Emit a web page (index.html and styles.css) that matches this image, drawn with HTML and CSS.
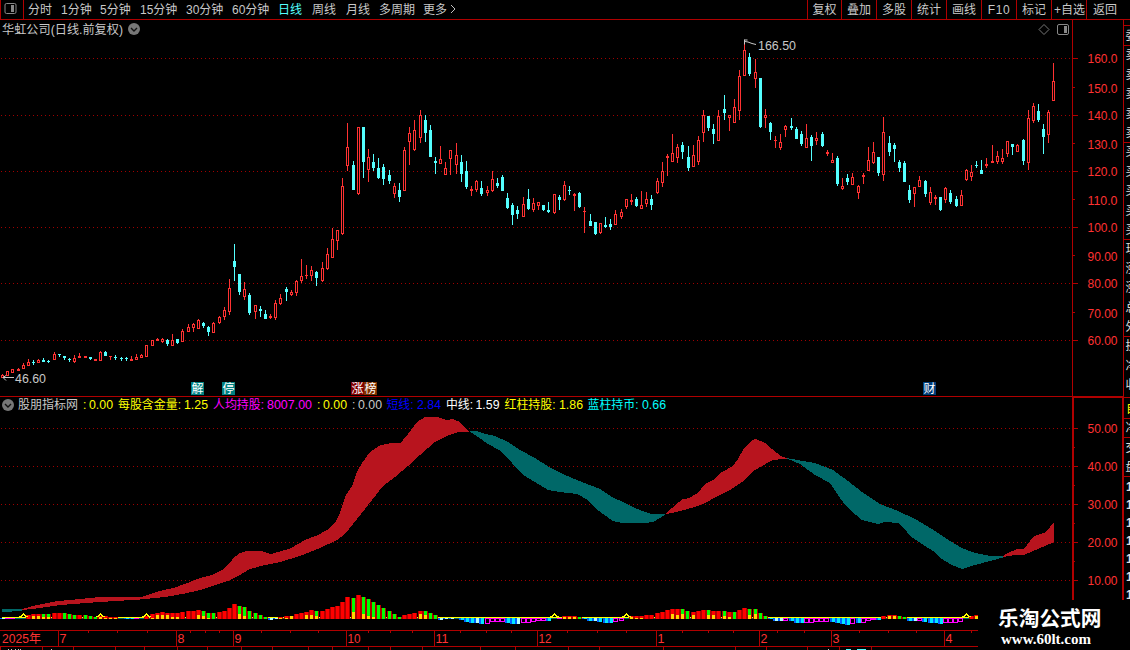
FILE: index.html
```html
<!DOCTYPE html>
<html lang="zh-CN">
<head>
<meta charset="utf-8">
<title>华虹公司 日线</title>
<link rel="stylesheet" href="styles.css">
</head>
<body>
<div class="terminal">
  <header class="toolbar">
    <div class="layout-toggle"><svg width="13" height="11" viewBox="0 0 13 11"><rect x="1" y=".5" width="11" height="10" rx="1.5" fill="none" stroke="#888"/><rect x="7" y="2" width="3" height="7" fill="#888"/></svg></div>
    <nav class="periods">
      <span class="p2">分时</span><span class="p3">1分钟</span><span class="p3 five">5分钟</span><span class="p4">15分钟</span><span class="p4">30分钟</span><span class="p4">60分钟</span><span class="day active">日线</span><span class="day">周线</span><span class="p2">月线</span><span class="multi">多周期</span><span class="more">更多</span>
      <svg class="chevron" width="7" height="10" viewBox="0 0 7 10"><path d="M1 1l4 4-4 4" fill="none" stroke="#c0c0c0"/></svg>
    </nav>
    <div class="actions"><span class="first">复权</span><span>叠加</span><span>多股</span><span>统计</span><span>画线</span><span class="latin">F10</span><span>标记</span><span class="tight">+自选</span><span class="last">返回</span></div>
  </header>
  <main class="workspace">
    <div class="charts">
      <svg id="price" width="1123" height="377" viewBox="0 20 1123 377"></svg>
      <svg id="indicator" width="1123" height="233" viewBox="0 397 1123 233"></svg>
      <svg id="timeline" width="1123" height="20" viewBox="0 630 1123 20"></svg>
    </div>
    <svg id="quotes" width="7" height="630" viewBox="1123 20 7 630"></svg>
  </main>
  <div class="brand"><strong>乐淘公式网</strong><span>www.60lt.com</span></div>
</div>
<script src="chart.js"></script>
</body>
</html>
```
FILE: styles.css
```css
body { margin: 0; background: #000; }
.terminal { position: relative; width: 1130px; height: 650px; overflow: hidden; background: #000; color: #c8c8c8; font: 12px/20px "Liberation Sans", "Noto Sans CJK SC", sans-serif; }
.toolbar { display: flex; box-sizing: border-box; height: 20px; border-bottom: 1px solid #b00000; white-space: nowrap; }
.layout-toggle { box-sizing: border-box; width: 24px; height: 19px; border-left: 1px solid #b00000; border-right: 1px solid #b00000; padding: 3px 0 0 3px; line-height: 0; }
.periods { display: flex; flex: 1; padding-left: 4px; }
.p2 { width: 33px; }
.p3 { width: 39px; }
.five { width: 40px; }
.p4 { width: 46px; }
.day { width: 34px; }
.multi { width: 44px; }
.more { width: 27px; }
.active { color: #54ffff; }
.chevron { margin-top: 4px; }
.actions { display: flex; }
.actions span { box-sizing: border-box; width: 35px; border-left: 1px solid #b00000; text-align: center; height: 19px; }
.actions .first { width: 34px; }
.actions .latin { letter-spacing: .6px; }
.actions .tight { padding-left: 1px; }
.actions .last { width: 44px; padding-right: 7px; }
.workspace { display: flex; height: 630px; }
.charts { display: flex; flex-direction: column; width: 1123px; }
svg { display: block; flex: none; }
svg text { font-family: "Liberation Sans", "Noto Sans CJK SC", sans-serif; font-size: 12px; }
.num { font-size: 12.5px; }
.strong-num { font-weight: 700; }
.brand { position: absolute; right: 0; bottom: 0; box-sizing: border-box; width: 152px; height: 50px; padding: 5px 0 0 20px; background: #000; color: #fff; display: flex; flex-direction: column; gap: 2px; }
.brand strong { font: 700 20.7px/24px "Noto Sans CJK SC", sans-serif; white-space: nowrap; }
.brand span { padding-left: 3px; font: 700 15px/16px "Liberation Serif", serif; }
```
FILE: chart.js
```javascript
const RED = '#ff3232', CYAN = '#54ffff', LINE = '#b00000', GREY = '#c8c8c8';
const rect = (x, y, w, h, f) => `<rect x="${x}" y="${y}" width="${w}" height="${h}" fill="${f}" shape-rendering="crispEdges"/>`;
const text = (x, y, s, f, len, cls = '') => `<text x="${x}" y="${y}" fill="${f}" class="${cls}"${len ? ` textLength="${len}" lengthAdjust="spacingAndGlyphs"` : ''}>${s}</text>`;
const set = (id, s) => { document.getElementById(id).innerHTML = s; };

// Candles: group origin in px, then centre, high, body top, body bottom, low in thirds of a px; r = rising, c = falling.
const groups = [
[0, 230, `7,433,436,443,443r 22,423,423,436,436r 37,417,417,428,428r 55,414,417,422,422r 70,399,405,416,416r 85,387,396,407,407r 100,390,396,398,402c 115,387,391,398,398r 130,384,390,395,395c 145,390,393,395,398c 163,366,372,389,389r 178,372,372,374,380c 193,378,378,382,389c 208,384,387,389,393c 223,375,384,395,398r 238,369,378,383,383r 256,378,378,382,382r 271,381,381,385,388c 286,387,387,392,392r 301,363,366,392,392r 316,363,366,377,377c 331,378,378,380,387r 346,375,381,383,387c 364,381,384,386,391c 379,381,384,386,392c 394,378,387,391,391r 409,372,381,389,389r 424,372,375,383,383r 439,345,345,380,380r 457,330,330,347,347r 472,324,327,332,332r 487,324,327,335,338r 502,327,330,341,347c 517,312,330,347,347r 532,327,327,338,341c 547,297,303,335,335r 565,282,291,305,305r 580,279,282,293,305r 595,267,270,296,296r 610,276,279,287,293c 625,288,291,305,317c 640,276,279,308,308r 658,258,261,278,281r 673,231,240,260,269r 688,147,174,245,254r 703,42,93,110,152c 718,132,132,185,194c 733,156,177,200,209r 748,189,195,248,254c 766,225,225,245,266r 781,228,237,241,260c 796,240,252,266,266c 811,252,258,262,266r 826,210,219,263,269r 841,192,204,221,224r 859,171,177,185,212c 874,180,186,194,197r 889,150,153,188,197r 904,87,138,152,158r 919,105,135,137,146r 934,108,120,137,152r 949,123,126,143,167c 967,96,114,152,155r 982,54,72,116,119r 997,-6,27,83,83r 1012,0,0,31,59r`],
[320, 90, `67,264,288,431,434r 82,99,171,227,242r 100,213,225,299,299c 115,111,111,311,314r 130,111,111,215,263c 145,177,201,239,275r 160,192,216,233,242c 175,204,234,261,264c 190,222,231,266,284c 208,240,255,272,281c 223,279,288,311,323r 238,279,300,320,335c 253,171,180,302,302r 268,111,129,155,224r 283,90,120,179,182r 301,60,75,143,158r 316,75,90,128,155c 331,105,120,200,200c 346,201,213,218,251c 361,168,207,221,221r 376,216,234,254,254r 391,180,180,206,254r 409,159,195,224,251r 424,195,216,251,275c 439,213,243,290,296c 454,288,297,302,317r 469,270,273,299,305r 484,273,294,311,317c 502,288,300,308,317r 517,243,267,302,305r 532,264,279,287,293c 547,255,261,302,302c 562,309,324,353,356c 577,339,345,374,404c 592,348,360,371,386c 610,321,342,380,380r 625,297,327,356,359c 640,324,339,359,365r 655,336,336,347,359r 670,345,345,359,362c 685,336,360,365,368c 703,312,312,368,371r 718,315,321,329,359c 733,273,285,329,332r 748,288,300,302,314c 763,309,312,317,362r 778,306,309,350,353c 793,351,363,365,428r 811,372,393,407,407c 826,396,396,431,434c 841,399,399,428,431r 856,381,405,410,413c`],
[580, 30, `91,567,582,590,599c 106,540,552,584,584r 124,537,546,560,566r 139,507,507,530,536r 154,492,510,515,524r 169,501,507,527,530c 184,483,525,536,536r 199,486,507,521,530r 214,495,507,524,539c 232,444,453,488,491r 247,396,423,458,470r 262,372,378,383,437r 277,312,369,395,395r 292,342,351,383,398r 307,336,345,365,386c 325,348,381,413,422c 340,345,375,410,410r 355,318,330,395,404r 370,240,255,308,335r 385,258,258,293,302c 400,282,297,311,341c 415,240,258,332,332r 433,195,237,248,269c 448,255,255,263,302r 463,207,231,278,278r 478,120,138,242,269r 493,39,60,137,137r 508,69,81,131,137c 526,87,126,146,173r 541,144,144,290,293c 556,237,255,263,293r 571,276,279,305,329c 586,318,330,332,353r 601,312,336,353,359r 616,285,288,299,320r 634,264,288,293,299c 649,291,297,326,326c 664,303,312,341,347c 679,282,324,353,353r 694,315,321,347,392c 709,306,324,332,344r 727,306,312,347,350c 742,360,366,371,377r 757,369,390,398,398r 772,378,384,461,467c 787,444,468,476,479r 802,432,444,455,464c 817,429,441,464,464r 835,465,468,488,506r 850,432,435,440,461r`],
[860, 50, `10,371,375,380,401r 25,291,330,362,362r 40,276,306,338,341r 55,321,321,368,377c 70,201,246,374,392r 88,258,279,305,317c 103,279,285,296,335c 118,330,336,353,365c 133,333,339,395,395c 148,405,420,449,458c 163,411,411,431,470r 178,378,390,410,410r 196,390,393,431,440c 211,411,426,458,464r 226,435,441,446,464r 241,441,441,479,482c 256,411,414,449,458r 271,420,429,455,461c 289,438,447,467,470c 304,420,435,467,467r 319,357,360,389,392r 334,345,366,380,392r 349,333,345,347,353c 364,330,360,371,371c 379,324,342,347,353r 397,285,333,338,338r 412,303,318,335,341r 427,297,324,335,341r 442,273,273,311,320r 457,282,282,290,314c 472,282,285,305,305r 490,267,270,332,344c 505,180,204,338,359r 520,159,168,212,218r 535,162,183,209,215c 550,222,237,260,311c 565,180,186,254,278r 580,39,93,152,152r`]];

const grid = ys => ys.map(y => `<path d="M1 ${y}.5H1072" stroke="#a00000" stroke-dasharray="1 3" shape-rendering="crispEdges"/>`).join('');
const roundIcon = (x, y) => `<circle cx="${x}" cy="${y}" r="6" fill="#777"/><path d="M${x - 3} ${y - 1}l3 3 3-3" fill="none" stroke="#111" stroke-width="1.4"/>`;

let p = grid([58, 115, 171, 227, 283, 340]);
for (const [ox, oy, data] of groups) for (const item of data.split(' ')) {
  const up = item.endsWith('r'), v = item.slice(0, -1).split(',').map(Number), px = n => oy + Math.floor(n / 3);
  const x = ox + Math.floor(v[0] / 3), hi = px(v[1]), top = px(v[2]), bot = px(v[3]) + 1, lo = px(v[4]) + 1, col = up ? RED : CYAN;
  p += rect(x, hi, 1, lo - hi, col) + rect(x - 1, top, 3, bot - top, col);
  if (up && bot - top > 2) p += rect(x, top + 1, 1, bot - top - 2, '#000');
}
p += text(2, 33.500, '华虹公司(日线.前复权)', GREY, 121) + roundIcon(134, 29);
p += `<path d="M1044 24.5l5 5-5 5-5-5z" fill="none" stroke="#777"/><rect x="1057.5" y="24.5" width="11" height="10" rx="1.5" fill="none" stroke="#888"/>` + rect(1064, 26, 3, 7, '#888');
p += `<path d="M756 44.500l-4-1-4-1.500-3-.5m-.5 3v-5m0 .5h3" fill="none" stroke="${GREY}"/><path d="M3 377.500h11M3 377.500l3-2M3 377.500l3 3" fill="none" stroke="${GREY}"/>`;
p += text(758, 50, '166.50', GREY, 38, 'num') + text(15, 383, '46.60', GREY, 31, 'num');
[[191, '解', '#008080'], [222, '停', '#008080'], [351, '涨', '#800000'], [364, '榜', '#803000'], [923, '财', '#003c78']].forEach(([x, s, c]) => { p += rect(x, 382, 13, 13, c) + text(x + .5, 393, s, '#fff', 12); });
p += rect(1072, 20, 1, 377, LINE) + rect(0, 396, 1123, 1, LINE);
[59, 89, 116, 145, 172, 201, 228, 257, 284, 314, 341].forEach((y, i) => {
  const n = 160 - i * 10;
  p += text(1087.5, y + 4, n >= 100 ? n.toFixed(1) : n.toFixed(2), RED, 30, 'num') + rect(1073, [58, 87, 115, 143, 171, 199, 227, 255, 283, 312, 340][i], i % 2 ? 2 : 5, 1, LINE);
});
set('price', p);

// Ribbon between the fast and slow averages
let q = grid([428, 466, 504, 542, 580]);
const ribbons = [
['#006868', '2,609 22,609 22,611 2,612'],
['#b8141e', '22,609 37,605 58,601 75,599.5 100,597 142,597 150,594 160,591 175,587.500 190,582 200,578 212,575 222,570 228,565 234,557.500 240,553 246,551 261,551 271,554 280,551.500 290,548.500 298,544 305,540 318,535 327,530 335,523 340,513 346,495 352,486 357,472 362,463 370,452 380,445.500 391,443 400,443.500 408,434 417,422 426,416.500 436,416.500 446,420 453,419 460,422 469,431.500 458,432 447,436 435,442 420,455 408,466 395,477 383,486 372,500 361,514 353,524 345,534 337,540 320,548 300,556 290,559 280,562 265,565 250,569 240,575 230,580 215,585 200,590 185,593.500 165,597 140,599.500 100,602 60,605 40,608 22,610'],
['#006868', '469,431 478,431.500 485,434 495,436 508,442 520,450 535,458 549,467 565,475 582,482 600,489 612,497 625,503 635,508 645,512 652,514 665,514.500 660,518 653,522 645,523 620,522.500 613,521 603,514 595,508 588,500 577,494 560,492 548,490 540,485 525,476 516,468 508,458 499,450 488,444 478,437'],
['#b8141e', '665,514.500 672,508 682,499.500 689,498 698,493 705,484 713,480 722,472 733,466 738,459 743,450 750,442 755,438.500 765,443 772,449 781,456 788,458.500 773,460 760,467 752,472 742,482 730,490 718,496 705,503 695,507 680,511'],
['#006868', '786,458 815,463 833,470 848,481 862,492 880,504 898,511 915,519 932,529 947,539 962,548 975,553 990,556 1003,556 1003,557.500 990,561 975,565 962,569 952,565 940,558 935,552 925,546 910,536 905,529 898,523 885,522 878,524 870,522 862,520 850,510 845,505 838,495 830,483 815,475 800,464'],
['#b8141e', '1003,556 1008,553 1017,549 1024,549 1033,537 1040,534 1046,532 1054,522 1054,542 1045,546 1033,551 1024,555 1015,555 1003,557']];
ribbons.forEach(([c, pts]) => { q += `<polygon points="${pts}" fill="${c}" shape-rendering="crispEdges"/>`; });

// Histogram: centre, height, colour (r, g rising; c, m, w below the axis), yellow base height
q += rect(2, 617, 976, 1, '#ffff00') + rect(2, 618, 976, 1, '#006868');
const bars = `2 1 w,7 1 m,12 1 m,28 4 r,33 5 r 3,38 5 r 3,43 5 g 2,48 5 g 2,54 6 r,59 6 r,64 6 g,69 5 g,74 4 g,79 4 r,85 4 g,90 3 g,95 2 g,100 3 r 2,105 3 r 1,110 2 r 1,115 2 r 1,126 1 c,131 1 c,136 1 m,146 3 r,152 5 r 1,157 6 r 4,162 7 r 4,167 6 r 4,172 6 r 2,177 6 r 2,182 7 r,188 8 r,193 8 r,198 9 r 4,203 8 g 3,208 6 g 1,213 6 g,219 7 r,224 8 r,229 11 r,234 15 r,239 13 g 5,244 12 g 3,249 8 g,255 6 g,260 4 g,265 2 g,270 2 w,275 1 w,280 2 r 1,286 3 r 1,291 3 r 3,296 5 r,301 6 r,306 7 r 4,311 9 r 4,316 8 g 3,322 8 r,327 10 r,332 12 r,337 13 r,342 17 r,347 22 r,353 21 g 7,358 24 r,363 22 g 5,368 20 g 3,373 17 g 2,378 14 g,383 11 g,389 8 g,394 5 g,399 2 g,404 4 r,409 5 r,414 6 r,420 8 r 5,425 8 g 4,430 6 g,435 4 g,440 2 w,445 1 w,451 1 w,461 2 c,466 4 c,471 5 c,476 5 w,481 6 c,487 6 m,492 4 m,497 4 m,502 4 m,507 5 c,512 6 c,517 6 w,523 5 m,528 5 m,533 4 m,538 3 m,543 3 m,548 3 c,559 1 m,564 3 r 2,569 3 r 2,574 3 r 2,579 2 g,584 1 c,589 3 c,594 3 w,599 4 c,605 5 c,610 5 c,615 4 m,621 3 m,631 3 r 2,636 3 r 1,641 3 r 1,646 4 r,651 4 r,657 6 r,662 7 r,667 9 r,672 10 r 5,677 10 r 4,682 10 g 5,687 8 g,693 7 r 4,698 8 r,703 9 r,708 9 g 4,713 8 r 4,718 8 r,724 8 g 3,729 7 r 2,734 7 g,739 9 r,744 11 r,749 10 g 4,755 10 g 5,760 6 g,765 3 g,770 1 c,775 3 w,780 3 w,785 3 m,791 3 c,796 5 c,801 5 c,806 5 m,811 5 m,816 4 m,821 4 m,826 4 m,832 4 c,837 5 c,842 6 c,847 7 c,852 6 m,858 5 c,863 5 m,868 3 m,873 2 m,878 2 c,883 3 r,889 4 r 3,894 4 r 3,899 3 g,904 2 g,909 3 c,914 3 w,919 3 m,924 4 c,930 5 c,935 5 c,940 6 c,945 5 m,950 5 m,955 5 m,960 4 m,971 3 r,976 4 r 3`;
for (const s of bars.split(',')) {
  const [a, b, c, d] = s.split(' '), x = +a, h = +b;
  if (c === 'r' || c === 'g') {
    q += rect(x - 2, 619 - h, 5, h, LINE) + rect(x - 1, 619 - h, 3, h, c === 'r' ? '#ff0000' : '#00ff00');
    if (d) q += rect(x - 1, 619 - d, 3, +d, '#ffd800');
  } else if (c === 'm') {
    q += rect(x - 2, 618, 5, h, '#ff00ff');
    if (h > 2) q += rect(x - 1, 619, 3, h - 2, '#000');
  } else q += rect(x - 2, 618, 2, h, '#0060ff') + rect(x, 618, 3, h, c === 'w' ? '#b0ffff' : '#00e8ff');
}
[23, 100, 146, 554, 626, 966].forEach(x => { q += rect(x - 4, 616, 3, 1, '#ff0') + rect(x - 2, 615, 2, 1, '#ff0') + rect(x - 1, 614, 3, 1, '#ff0') + rect(x, 613, 1, 1, '#ff0') + rect(x + 1, 615, 2, 1, '#ff0') + rect(x + 2, 616, 3, 1, '#ff0'); });
q += roundIcon(8, 405);
[[18, '股朋指标网', GREY, 60], [83, ':', '#ff0'], [89, '0.00', '#ff0', 24], [118, '每股含金量:', '#ff0', 63], [184, '1.25', '#ff0', 24], [213, '人均持股:', '#f0f', 51], [267, '8007.00', '#f0f', 45], [317, ':', '#ff0'], [323, '0.00', '#ff0', 24], [352, ':', GREY], [358, '0.00', GREY, 24], [386.5, '短线:', '#00f', 27], [417, '2.84', '#00f', 24], [446, '中线:', '#fff', 27], [475.500, '1.59', '#fff', 24], [504.500, '红柱持股:', '#ff0', 51], [559, '1.86', '#ff0', 24], [587.500, '蓝柱持币:', '#0ff', 51], [642, '0.66', '#0ff', 24]].forEach(([x, s, c, n]) => { q += text(x, 409, s, c, n, /\d/.test(s) ? 'num' : ''); });
q += rect(1072, 397, 2, 233, LINE) + rect(1072, 397, 51, 1, LINE) + rect(1122, 397, 1, 233, LINE);
[428, 466, 504, 542, 580].forEach((y, i) => { q += rect(1074, y, 4, 1, LINE) + (i < 4 ? rect(1074, y + 19, 1, 1, LINE) : '') + text(1087.500, y + 5, `${50 - i * 10}.00`, RED, 30, 'num'); });
set('indicator', q);

let t = rect(0, 630, 978, 1, LINE) + rect(0, 646, 978, 1, LINE);
[88, 117, 147, 190, 205, 219, 261, 290, 318, 368, 390, 412, 460, 486, 511, 567, 597, 626, 682, 708, 733, 777, 804, 859, 888, 916, 971].forEach(x => { t += rect(x, 631, 1, 2, LINE); });
[[58, 7], [176, 8], [233, 9], [346, 10], [434, 11], [537, 12], [656, 1], [759, 2], [831, 3], [944, 4]].forEach(([x, n]) => { t += rect(x, 631, 1, 15, LINE) + text(x + 1.500, 643, n, RED, n > 9 ? 13 : 0, 'num'); });
t += text(2, 643, '2025年', RED, 39, 'num');
[0, 42, 73, 115, 144, 177, 207, 241, 272, 308, 332, 368, 390, 422, 480, 515, 568, 599, 663, 735, 766, 807, 839, 871].forEach(x => { t += rect(x, 647, 1, 3, LINE); });
[8, 11, 15, 18, 20, 51, 828].forEach(x => { t += rect(x, 649, 1, 1, GREY); });
t += rect(846, 649, 5, 1, CYAN) + rect(857, 649, 9, 1, CYAN);
set('timeline', t);

// Quote panel, cut by the window edge
let s = rect(1123, 20, 1, 580, LINE);
[25, 45, 142, 239, 336, 397, 418, 437, 476].forEach(y => { s += rect(1124, y, 6, 1, LINE); });
[...'委卖卖卖卖卖买买买买买现涨涨总外换净收'].forEach((ch, i) => { s += text(1125.5, 40 + i * 19.400, ch, '#ddd', 12); });
s += text(1126, 413, '自', '#ff0', 12) + text(1125.500, 432, '净', '#ddd', 12) + text(1125.500, 452, '交', '#ddd', 12) + text(1125.500, 471, '盘', '#ddd', 12);
for (let i = 0; i < 7; i++) s += text(1126, 491 + i * 18, '1', '#ddd', 0, 'strong-num');
set('quotes', s);
```
